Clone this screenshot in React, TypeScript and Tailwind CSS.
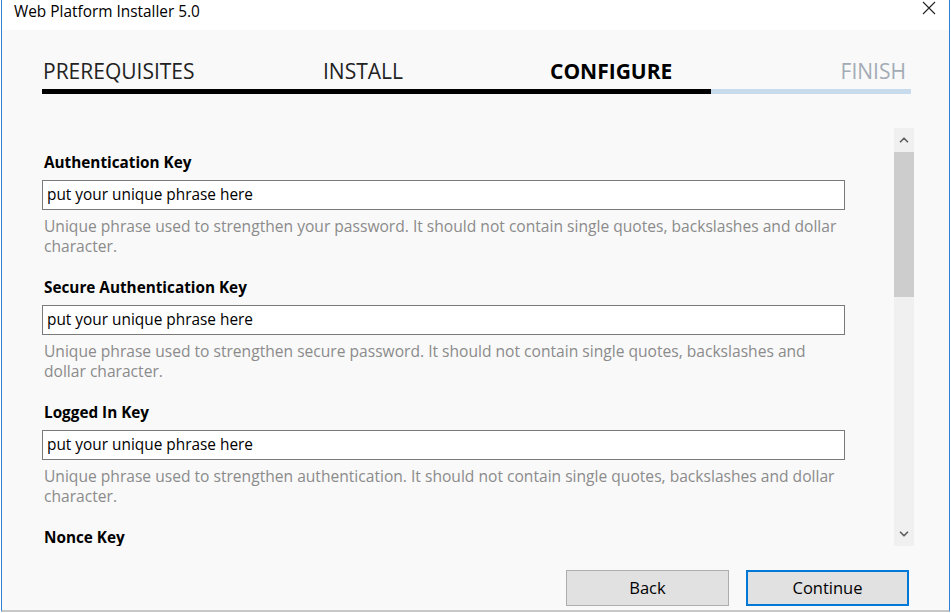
import { ChevronUp, ChevronDown } from "lucide-react";

const font = { fontFamily: '"Open Sans", "Noto Sans", sans-serif' };

interface KeyField {
  label: string;
  lines: string[];
}

const fields: KeyField[] = [
  {
    label: "Authentication Key",
    lines: [
      "Unique phrase used to strengthen your password. It should not contain single quotes, backslashes and dollar",
      "character.",
    ],
  },
  {
    label: "Secure Authentication Key",
    lines: [
      "Unique phrase used to strengthen secure password. It should not contain single quotes, backslashes and",
      "dollar character.",
    ],
  },
  {
    label: "Logged In Key",
    lines: [
      "Unique phrase used to strengthen authentication. It should not contain single quotes, backslashes and dollar",
      "character.",
    ],
  },
];

function Field({ field, first }: { field: KeyField; first: boolean }) {
  return (
    <div className={first ? "" : "mt-[21px]"}>
      <div className="text-[15.3px] leading-[20px] font-bold text-black pl-[2px]">{field.label}</div>
      <div className="mt-[8px] h-[30px] w-[803px] bg-white border border-[#7a7a7a] flex items-center pl-[4px] text-[15.4px] text-black">
        put your unique phrase here
      </div>
      <div className="mt-[6px] text-[15.6px] leading-[20px] text-[#8b8b8b] pl-[2px]">
        {field.lines.map((l, i) => (
          <div key={i} className="whitespace-nowrap">
            {l}
          </div>
        ))}
      </div>
    </div>
  );
}

export default function App() {
  return (
    <div className="w-[951px] h-[613px] bg-white pl-px" style={font}>
      <div className="w-[949px] h-[612px] border-l border-r border-[#2f7fd6] border-b-[2px] border-b-[#c8c8c8] flex flex-col">
        <div className="h-[30px] bg-white flex items-center justify-between shrink-0">
          <span className="pl-[12px] text-[15.4px] text-black -mt-[7px]">Web Platform Installer 5.0</span>
          <svg width="16" height="16" viewBox="0 0 16 16" className="mr-[12px] -mt-[14px]">
            <path d="M2 2 L14 14 M14 2 L2 14" stroke="#222" strokeWidth="1.1" />
          </svg>
        </div>
        <div className="flex-1 bg-[#f9f9f9] px-[40px]">
          <div className="mt-[27px] grid grid-cols-[280px_227px_1fr_auto] pl-px pr-[3px] text-[21px] leading-[28px]">
            <span className="text-[#222]">PREREQUISITES</span>
            <span className="text-[#222]">INSTALL</span>
            <span className="font-bold text-black">CONFIGURE</span>
            <span className="text-[#a3acb5]">FINISH</span>
          </div>
          <div className="mt-[4px] h-[5px] w-[869px] bg-[#c7dbec]">
            <div className="h-[5px] w-[669px] bg-black" />
          </div>
          <div className="mt-[34px] h-[418px] w-[872px] flex">
            <div className="flex-1 overflow-hidden pt-[24px]">
              {fields.map((f, i) => (
                <Field key={f.label} field={f} first={i === 0} />
              ))}
              <div className="mt-[21px] text-[15.3px] leading-[20px] font-bold text-black pl-[2px]">Nonce Key</div>
            </div>
            <div className="w-[20px] bg-[#f0f0f0] flex flex-col items-center">
              <div className="h-[24px] flex items-center justify-center">
                <ChevronUp size={14} strokeWidth={3} className="text-[#606060]" />
              </div>
              <div className="w-[20px] h-[145px] bg-[#cdcdcd]" />
              <div className="flex-1" />
              <div className="h-[24px] flex items-center justify-center">
                <ChevronDown size={14} strokeWidth={3} className="text-[#606060]" />
              </div>
            </div>
          </div>
          <div className="mt-[24px] flex justify-end gap-[17px]">
            <button className="w-[163px] h-[36px] bg-[#e1e1e1] border border-[#adadad] text-[16.5px] text-black">
              Back
            </button>
            <button className="w-[163px] h-[36px] bg-[#e1e1e1] border-[2px] border-[#0078d7] text-[16.5px] text-black">
              Continue
            </button>
          </div>
        </div>
      </div>
    </div>
  );
}
